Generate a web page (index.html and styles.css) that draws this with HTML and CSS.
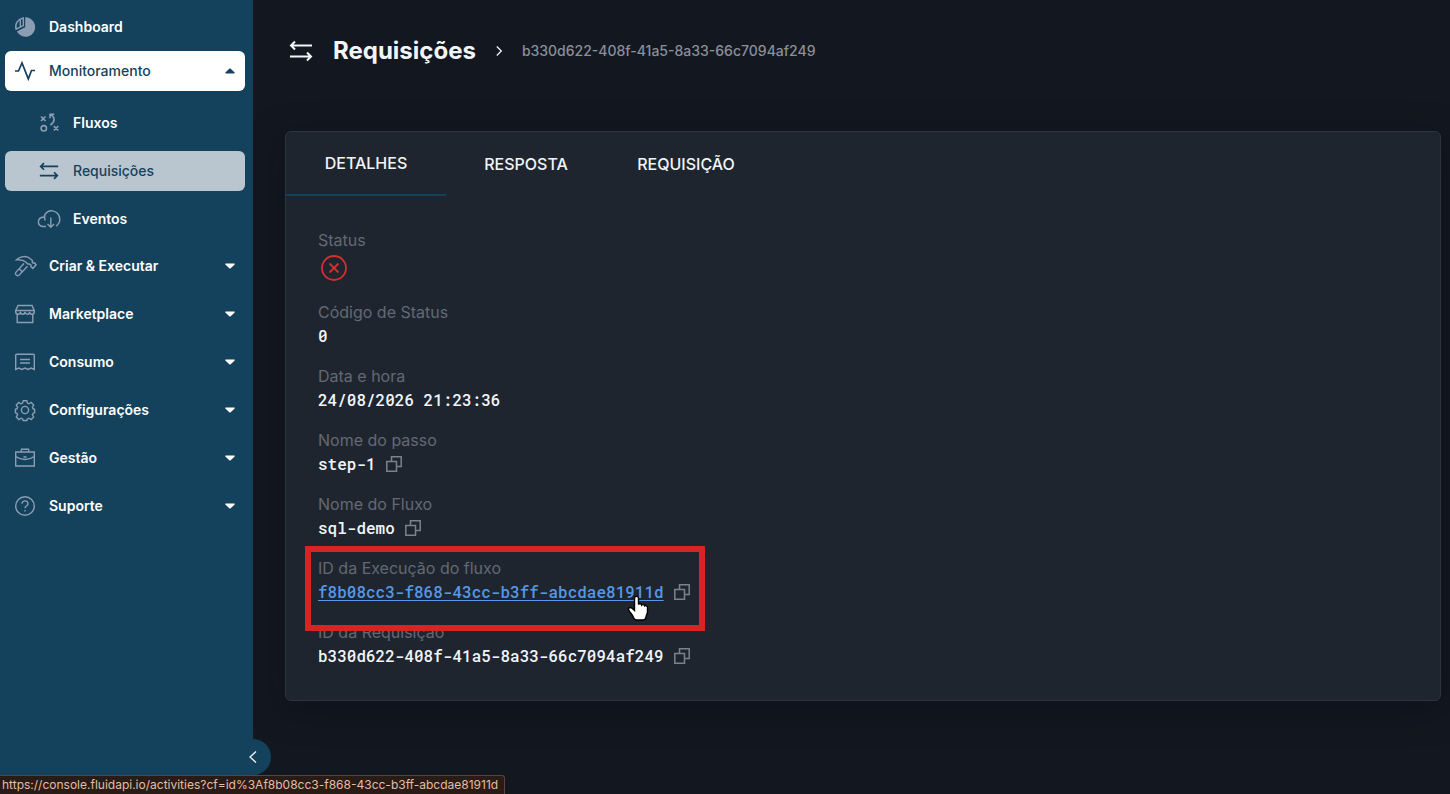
FILE: index.html
```html
<!DOCTYPE html>
<html lang="pt-BR">
  <head>
    <meta charset="UTF-8" />
    <meta name="viewport" content="width=device-width, initial-scale=1.0" />
    <title>Requisições</title>
    <link rel="stylesheet" href="styles.css">
  </head>
  <body>
    <!-- shared icons -->
    <svg class="sprite" aria-hidden="true">
      <symbol id="swap" viewBox="0 0 24 24">
        <path d="M23 6.500H2M6 2.500l-4 4 4 4M1 17.500h21M18 13.500l4 4-4 4" />
      </symbol>
      <symbol id="copy" viewBox="0 0 16 16">
        <path d="M.8 5.500h9.700v9.700H.8zM5.500 5.500V.8h9.700v9.700h-4.700" />
      </symbol>
      <symbol id="caret" viewBox="0 0 10 6">
        <path d="M.8.500h8.400c.5 0 .7.500.4.900L5.700 5.200c-.4.400-1 .4-1.400 0L.4 1.400C.1 1 .3.500.8.500z" />
      </symbol>
    </svg>

    <div class="layout">
      <aside class="sidebar">
        <nav>
          <div class="menu menu-top">
            <a class="menu-item" href="#">
              <svg class="icon" viewBox="0 0 20 20">
                <path class="solid" d="M10.200.3a9.700 9.700 0 1 1-8.300 14.200l8.300-4.300z" />
                <path d="M8.300 1v7.500L1 12.200C-.3 6.500 3 2 8.300 1zM5.300 3v6.500" />
              </svg>
              <span>Dashboard</span>
            </a>
            <button class="menu-item open" type="button" aria-expanded="true">
              <svg class="icon" viewBox="0 0 20 20">
                <path d="M0 10h3.500L7 2l6.300 15.800L16.500 9.500H20" />
              </svg>
              <span>Monitoramento</span>
              <svg class="caret up"><use href="#caret" /></svg>
            </button>
          </div>

          <div class="menu submenu">
            <a class="menu-item" href="#">
              <svg class="icon" viewBox="0 0 20 20">
                <path d="M2 3.500l4.500 4.500M6.500 3.500L2 8M14.800 13l4.500 4.500M19.300 13l-4.500 4.500M10.800 1.200h4.500M11 .8v4.500M11.500 1.800c5 2.200 4.500 7.700-.2 10.200" />
                <circle cx="4.800" cy="15.300" r="2.700" />
              </svg>
              <span>Fluxos</span>
            </a>
            <a class="menu-item current" href="#" aria-current="page">
              <svg class="icon"><use href="#swap" /></svg>
              <span>Requisições</span>
            </a>
            <a class="menu-item" href="#">
              <svg class="icon icon-wide" viewBox="0 0 24 20">
                <path d="M9 17.500H5.800C-.7 17 .2 7.800 7 8.300 8.500-1.500 23 .2 22.800 10.500c0 3.200-1.800 5.200-3.600 6.600M8.200 11.500c-.8-2.200-.9-3.300-.3-5.200M13.800 8.500v9.800M10.500 15l3.300 3.300 3.300-3.300" />
              </svg>
              <span>Eventos</span>
            </a>
          </div>

          <div class="menu">
            <button class="menu-item" type="button" aria-expanded="false">
              <svg class="icon" viewBox="0 0 20 20">
                <path d="M1.500 3.800C5.500-.3 12-.5 16 3.200l1.500 1.600-.2 1.700 1 .8 1.300-.4 1.500 1.800-3.300 3.700-2-1.800.2-1.500-1.500-1.200-1.800.2-2-2C9 4.500 5 3.500 1.500 3.800zM9 7.500L.8 16.400c-1.300 2 1.300 4.200 3.200 2.800l8.500-8.900M4.200 12.800L7 15.600" />
              </svg>
              <span>Criar &amp; Executar</span>
              <svg class="caret"><use href="#caret" /></svg>
            </button>
            <button class="menu-item" type="button" aria-expanded="false">
              <svg class="icon" viewBox="0 0 20 20">
                <path d="M3 1.500h14L19.300 6.500v1.200c0 3.300-4.700 3.300-4.700 0 0 3.300-4.600 3.300-4.600 0 0 3.300-4.600 3.300-4.600 0 0 3.300-4.700 3.300-4.700 0V6.500zM.7 6.500h18.600M2.200 10.500v8h15.600v-8" />
              </svg>
              <span>Marketplace</span>
              <svg class="caret"><use href="#caret" /></svg>
            </button>
            <button class="menu-item" type="button" aria-expanded="false">
              <svg class="icon" viewBox="0 0 20 20">
                <path d="M.7 17.500V3.200c0-.6.400-1 1-1h16.600c.6 0 1 .4 1 1v14.300L16.200 16l-3.100 1.500L10 16l-3.100 1.500L3.800 16zM5 7.500h10M5 11h10" />
              </svg>
              <span>Consumo</span>
              <svg class="caret"><use href="#caret" /></svg>
            </button>
            <button class="menu-item" type="button" aria-expanded="false">
              <svg class="icon" viewBox="0 0 20 20">
                <circle cx="10" cy="10" r="3.600" />
                <path d="M8.200.7h3.600l.6 2.400 1.600.7 2.200-1.300 2.500 2.500-1.300 2.200.7 1.600 1.500.4v3.600l-1.500.5-.7 1.500 1.300 2.200-2.500 2.500-2.200-1.300-1.600.7-.6 1.600H8.200l-.6-1.600-1.600-.7-2.200 1.300L1.300 17l1.300-2.200-.7-1.500-1.500-.5V9.200l1.500-.4.7-1.600L1.300 5l2.500-2.500L6 3.800l1.600-.7z" />
              </svg>
              <span>Configurações</span>
              <svg class="caret"><use href="#caret" /></svg>
            </button>
            <button class="menu-item" type="button" aria-expanded="false">
              <svg class="icon" viewBox="0 0 20 20">
                <path d="M.7 4h18.600v14H.7zM6 4l.5-2.800h7L14 4M.7 8.500c5.500 4 13.100 4 18.600 0M8.500 9h3" />
              </svg>
              <span>Gestão</span>
              <svg class="caret"><use href="#caret" /></svg>
            </button>
            <button class="menu-item" type="button" aria-expanded="false">
              <svg class="icon" viewBox="0 0 20 20">
                <circle cx="10" cy="10" r="9.300" />
                <path d="M7 7.800C7.200 3.800 13 4 13 7.700c0 2.300-3 2.300-3 4.500M10 14v1.500" />
              </svg>
              <span>Suporte</span>
              <svg class="caret"><use href="#caret" /></svg>
            </button>
          </div>
        </nav>
        <button class="collapse" type="button" aria-label="Recolher menu">
          <svg viewBox="0 0 8 12"><path d="M7 .5L1 6l6 5.500" /></svg>
        </button>
      </aside>

      <main class="content">
        <header class="page-header">
          <svg class="icon-title"><use href="#swap" /></svg>
          <h1>Requisições</h1>
          <svg class="separator" viewBox="0 0 6 10"><path d="M.8.500L5.300 5 .8 9.500" /></svg>
          <span class="request-id">b330d622-408f-41a5-8a33-66c7094af249</span>
        </header>

        <section class="card">
          <div class="tabs" role="tablist">
            <button class="tab active" type="button" role="tab" aria-selected="true">DETALHES</button>
            <button class="tab" type="button" role="tab" aria-selected="false">RESPOSTA</button>
            <button class="tab" type="button" role="tab" aria-selected="false">REQUISIÇÃO</button>
          </div>

          <dl class="details">
            <div class="field">
              <dt>Status</dt>
              <dd class="status">
                <svg class="status-error" viewBox="0 0 26 26" role="img" aria-label="Erro">
                  <circle cx="13" cy="13" r="12" />
                  <path d="M8.500 8.500l9 9M17.500 8.500l-9 9" />
                </svg>
              </dd>
            </div>
            <div class="field">
              <dt>Código de Status</dt>
              <dd>0</dd>
            </div>
            <div class="field">
              <dt>Data e hora</dt>
              <dd>24/08/2026 21:23:36</dd>
            </div>
            <div class="field">
              <dt>Nome do passo</dt>
              <dd>
                step-1
                <button class="copy" type="button" aria-label="Copiar"><svg><use href="#copy" /></svg></button>
              </dd>
            </div>
            <div class="field">
              <dt>Nome do Fluxo</dt>
              <dd>
                sql-demo
                <button class="copy" type="button" aria-label="Copiar"><svg><use href="#copy" /></svg></button>
              </dd>
            </div>
            <div class="field marked">
              <dt>ID da Execução do fluxo</dt>
              <dd>
                <a href="#">f8b08cc3-f868-43cc-b3ff-abcdae81911d</a>
                <button class="copy" type="button" aria-label="Copiar"><svg><use href="#copy" /></svg></button>
              </dd>
              <div class="highlight"></div>
              <svg class="pointer" viewBox="0 0 22 26">
                <path d="M7.500 3.500c0-2.800 4-2.800 4 0v6c.5-1.200 3-.9 3.200.6.8-.9 2.700-.5 2.900.8 1.200-.7 2.900 0 2.900 1.600v4c0 2.500-1.300 3.500-1.500 5.500-.2 2-1.500 3-3 3H9.500c-1.500 0-2.500-1-3-2.500-.7-2.300-3-4.500-4.500-7-1.500-2.300 1-4 3-2.300l2.500 2.300z" />
              </svg>
            </div>
            <div class="field">
              <dt>ID da Requisição</dt>
              <dd>
                b330d622-408f-41a5-8a33-66c7094af249
                <button class="copy" type="button" aria-label="Copiar"><svg><use href="#copy" /></svg></button>
              </dd>
            </div>
          </dl>
        </section>
      </main>
    </div>

    <div class="link-preview">https://console.fluidapi.io/activities?cf=id%3Af8b08cc3-f868-43cc-b3ff-abcdae81911d</div>
  </body>
</html>
```
FILE: styles.css
```css
* {
  box-sizing: border-box;
}

body {
  margin: 0;
  background: #131820;
  color: #f1f5f9;
  font-family: Inter, "Liberation Sans", sans-serif;
  font-size: 16px;
  line-height: 24px;
}

button {
  padding: 0;
  border: none;
  background: none;
  color: inherit;
  font: inherit;
  cursor: pointer;
}

svg {
  display: block;
  flex: none;
  fill: none;
  stroke: currentColor;
}

.sprite {
  position: absolute;
  width: 0;
  height: 0;
}

.layout {
  display: flex;
  min-height: 100vh;
}

/* sidebar */
.sidebar {
  position: relative;
  flex: none;
  width: 253px;
  padding: 7px 8px 7px 5px;
  background: #14425d;
}

.menu {
  display: flex;
  flex-direction: column;
  gap: 8px;
}

.menu-top {
  gap: 4px;
}

.submenu {
  padding: 12px 0 7px;
}

.menu-item {
  display: flex;
  align-items: center;
  gap: 14px;
  width: 100%;
  height: 40px;
  padding: 0 10px;
  border-radius: 6px;
  color: #fff;
  font-size: 14px;
  font-weight: 600;
  text-align: left;
  text-decoration: none;
}

.submenu .menu-item {
  padding-left: 34px;
}

.menu-item.open {
  background: #fff;
  color: #14425d;
  font-weight: 500;
}

.menu-item.current {
  background: #b9c6cf;
  color: #14425d;
  font-weight: 500;
}

.icon {
  width: 20px;
  height: 20px;
  color: #8c9db3;
  stroke-width: 1.4;
  overflow: visible;
}

.submenu .icon {
  stroke-width: 1.6;
}

.submenu .icon-wide {
  width: 24px;
  margin: 0 -2px;
  stroke-width: 1.4;
}

.open .icon {
  color: inherit;
  stroke-width: 1.7;
}

.submenu .current .icon {
  color: inherit;
  stroke-width: 2;
}

.solid {
  fill: currentColor;
  stroke: none;
}

.caret {
  width: 10px;
  height: 6px;
  margin-left: auto;
  fill: currentColor;
  stroke: none;
}

.caret.up {
  transform: rotate(180deg);
}

.collapse {
  position: absolute;
  right: -18px;
  bottom: 19px;
  display: flex;
  align-items: center;
  justify-content: center;
  width: 36px;
  height: 36px;
  border-radius: 50%;
  background: #14425d;
}

.collapse svg {
  width: 8px;
  height: 12px;
  stroke-width: 1.3;
  overflow: visible;
}

/* content */
.content {
  flex: 1;
  min-width: 0;
  padding: 31px 9px 32px 32px;
}

.page-header {
  display: flex;
  align-items: center;
  height: 40px;
  margin-bottom: 60px;
  padding-left: 4px;
}

.icon-title {
  width: 24px;
  height: 24px;
  stroke-width: 2;
}

h1 {
  margin: 0 20px;
  font-size: 24px;
  font-weight: 700;
}

.separator {
  width: 6px;
  height: 10px;
  stroke-width: 1.3;
  overflow: visible;
}

.request-id {
  margin-left: 20px;
  color: #8b8f9a;
  font-size: 14px;
  font-weight: 500;
}

.card {
  border: 1px solid #2d3540;
  border-radius: 6px;
  background: #1f252f;
  box-shadow: 0 8px 32px rgba(8, 10, 24, 0.5);
}

.tabs {
  display: flex;
}

.tab {
  width: 160px;
  height: 64px;
  font-weight: 500;
}

.tab.active {
  border-bottom: 2px solid #14425d;
}

.details {
  display: flex;
  flex-direction: column;
  gap: 16px;
  margin: 0;
  padding: 32px;
}

dt {
  color: #626975;
}

dd {
  display: flex;
  align-items: center;
  gap: 10px;
  height: 24px;
  margin: 0;
  font-family: "Roboto Mono", "DejaVu Sans Mono", monospace;
  font-weight: 500;
}

dd a {
  color: #5598e7;
  text-underline-offset: 2px;
}

.status {
  height: 32px;
  padding-left: 3px;
}

.status-error {
  width: 26px;
  height: 26px;
  color: #d32f2f;
  stroke-width: 1.8;
}

.copy svg {
  width: 16px;
  height: 16px;
  color: #7b828e;
  stroke-width: 1.5;
}

.marked {
  position: relative;
}

.highlight {
  position: absolute;
  top: -10px;
  left: -13px;
  z-index: 1;
  width: 400px;
  height: 85px;
  border: 6px solid #d92522;
  pointer-events: none;
}

.pointer {
  position: absolute;
  top: 39px;
  left: 309px;
  z-index: 2;
  width: 22px;
  height: 26px;
  fill: #fff;
  stroke: #000;
  stroke-width: 1.4;
}

.link-preview {
  position: fixed;
  bottom: 0;
  left: 0;
  height: 19px;
  padding: 0 6px 0 2px;
  border: solid #54473f;
  border-width: 1px 1px 0 0;
  border-top-right-radius: 3px;
  background: #291b16;
  color: #e5bda5;
  font-size: 12px;
  line-height: 18px;
}
```
